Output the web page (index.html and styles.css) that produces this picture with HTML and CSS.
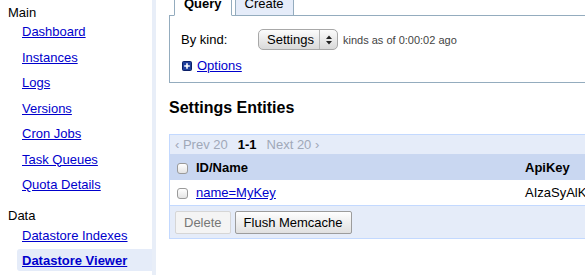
FILE: index.html
```html
<!DOCTYPE html>
<html lang="en">

<head>
    <meta charset="UTF-8">
    <title>Datastore Viewer</title>
    <link rel="stylesheet" href="styles.css">
</head>

<body>
    <div class="page">
        <div class="sidebar">
            <div class="nav-title">Main</div>
            <ul class="nav-list">
                <li><a href="#">Dashboard</a></li>
                <li><a href="#">Instances</a></li>
                <li><a href="#">Logs</a></li>
                <li><a href="#">Versions</a></li>
                <li><a href="#">Cron Jobs</a></li>
                <li><a href="#">Task Queues</a></li>
                <li><a href="#">Quota Details</a></li>
            </ul>
            <div class="nav-title nav-title-data">Data</div>
            <ul class="nav-list nav-list-data">
                <li><a href="#">Datastore Indexes</a></li>
                <li class="selected"><a href="#">Datastore Viewer</a></li>
            </ul>
        </div>

        <div class="main">
            <div class="tabs">
                <span class="tab tab-active">Query</span>
                <span class="tab">Create</span>
            </div>
            <div class="query-box">
                <div class="query-row">
                    <label class="kind-label" for="kind">By kind:</label>
                    <span class="select-box">
                        <select id="kind" name="kind">
                            <option>Settings</option>
                        </select>
                        <span class="select-arrows">
                            <svg width="6" height="10" viewBox="0 0 6 10">
                                <path d="M3 0.5 L6 4 L0 4 Z M0 6 L6 6 L3 9.5 Z" fill="#222" />
                            </svg>
                        </span>
                    </span>
                    <span class="kinds-note">kinds as of 0:00:02 ago</span>
                </div>
                <div class="options-row">
                    <svg width="10" height="10" viewBox="0 0 10 10">
                        <rect x="0.5" y="0.5" width="9" height="9" rx="1" fill="#1f3f9c" stroke="#0b1f66" />
                        <path d="M5 2.2 V7.8 M2.2 5 H7.8" stroke="#fff" stroke-width="1.6" />
                    </svg>
                    <a href="#">Options</a>
                </div>
            </div>

            <h2 class="entities-title">Settings Entities</h2>

            <div class="results">
                <div class="pager">
                    <span>&lsaquo; Prev 20</span>
                    <span class="pager-current">1-1</span>
                    <span>Next 20 &rsaquo;</span>
                </div>
                <div class="entity-row entity-head">
                    <span><input type="checkbox" class="check"></span>
                    <span>ID/Name</span>
                    <span>ApiKey</span>
                </div>
                <div class="entity-row">
                    <span><input type="checkbox" class="check"></span>
                    <span><a href="#">name=MyKey</a></span>
                    <span>AIzaSyAlK</span>
                </div>
                <div class="results-actions">
                    <button class="btn" disabled>Delete</button>
                    <button class="btn">Flush Memcache</button>
                </div>
            </div>
        </div>
    </div>
</body>

</html>
```

FILE: styles.css
```css
html {
    overflow: hidden;
}

body {
    margin: 0;
    font-family: "Liberation Sans", Arial, sans-serif;
    font-size: 13px;
    color: #000;
}

a {
    color: #00c;
}

.page {
    display: flex;
    min-height: 275px;
}

/* left navigation */
.sidebar {
    flex: none;
    width: 144px;
    padding: 5px 0 0 8px;
    border-right: 4px solid #e8eef8;
}

.nav-title {
    line-height: 16px;
}

.nav-title-data {
    margin-top: 12.5px;
}

.nav-list {
    list-style: none;
    margin: -1px 0 0 9px;
    padding: 0;
}

.nav-list-data {
    margin-top: 0;
}

.nav-list li {
    padding: 4px 0 2px 5px;
    margin-bottom: 3.5px;
    line-height: 16px;
    border-radius: 3px 0 0 3px;
}

.nav-list li.selected {
    background: #e5ecf9;
    font-weight: bold;
}

/* main column */
.main {
    flex: none;
    width: 640px;
    padding-left: 13px;
    margin-top: -9px;
}

.tabs {
    display: flex;
    gap: 3px;
    padding-left: 5px;
    margin-bottom: -1px;
}

.tab {
    padding: 4px 9px 3px;
    line-height: 16px;
    border: 1px solid #94acbe;
    background: #e5ecf9;
}

.tab-active {
    position: relative;
    background: #fff;
    border-bottom-color: #fff;
    font-weight: bold;
}

.query-box {
    border: 1px solid #94acbe;
    padding: 13px 11px 8px;
}

.query-row {
    display: flex;
    align-items: center;
    height: 21px;
}

.kind-label {
    width: 77px;
}

.select-box {
    display: inline-flex;
    align-items: stretch;
    height: 19px;
    border: 1px solid #a8a8a8;
    border-radius: 5px;
    background: linear-gradient(#fcfcfc, #d9d9d9);
}

.select-box select {
    appearance: none;
    -webkit-appearance: none;
    border: none;
    background: transparent;
    font-family: "Liberation Sans", Arial, sans-serif;
    font-size: 13px;
    color: #000;
    padding: 0 5px 0 8px;
    margin: 0;
    outline: none;
}

.select-arrows {
    display: flex;
    align-items: center;
    justify-content: center;
    width: 17px;
    border-left: 1px solid #b4b4b4;
}

.kinds-note {
    margin-left: 5px;
    font-size: 11px;
    color: #444;
}

.options-row {
    display: flex;
    align-items: center;
    gap: 5px;
    margin-top: 8px;
    padding-left: 1px;
    line-height: 16px;
}

.entities-title {
    margin: 16px 0 17px;
    font-size: 16px;
    line-height: 18px;
    font-weight: bold;
}

/* results grid */
.results {
    border: 1px solid #c3d9ff;
    border-right: none;
}

.pager {
    display: flex;
    gap: 10px;
    padding: 2px 5px 1px;
    line-height: 16px;
    background: #e5ecf9;
    color: #a0a8b8;
}

.pager-current {
    color: #000;
    font-weight: bold;
}

.entity-row {
    display: grid;
    grid-template-columns: 26px 329px 1fr;
    align-items: center;
    padding: 5px 0 4px;
    line-height: 16px;
    border-bottom: 1px solid #c3d9ff;
    white-space: nowrap;
}

.entity-head {
    padding: 6px 0 4px;
    background: #c9d7f1;
    font-weight: bold;
    border-bottom: none;
}

.check {
    appearance: none;
    -webkit-appearance: none;
    display: block;
    width: 11px;
    height: 11px;
    margin: 0 0 0 7px;
    border: 1px solid #9a9a9a;
    border-radius: 3px;
    background: linear-gradient(#fff, #e4e4e4);
}

.results-actions {
    display: flex;
    gap: 4px;
    padding: 5px 5px 4px;
    background: #e5ecf9;
}

.btn {
    height: 23px;
    padding: 0 8px;
    font-family: "Liberation Sans", Arial, sans-serif;
    font-size: 13px;
    color: #000;
    border: 1px solid #9c9c9c;
    border-radius: 2px;
    background: linear-gradient(#fefefe, #e0e0e0);
}

.btn:disabled {
    color: #777;
    border-color: #d6d6d6;
    background: #f4f4f4;
}
```
